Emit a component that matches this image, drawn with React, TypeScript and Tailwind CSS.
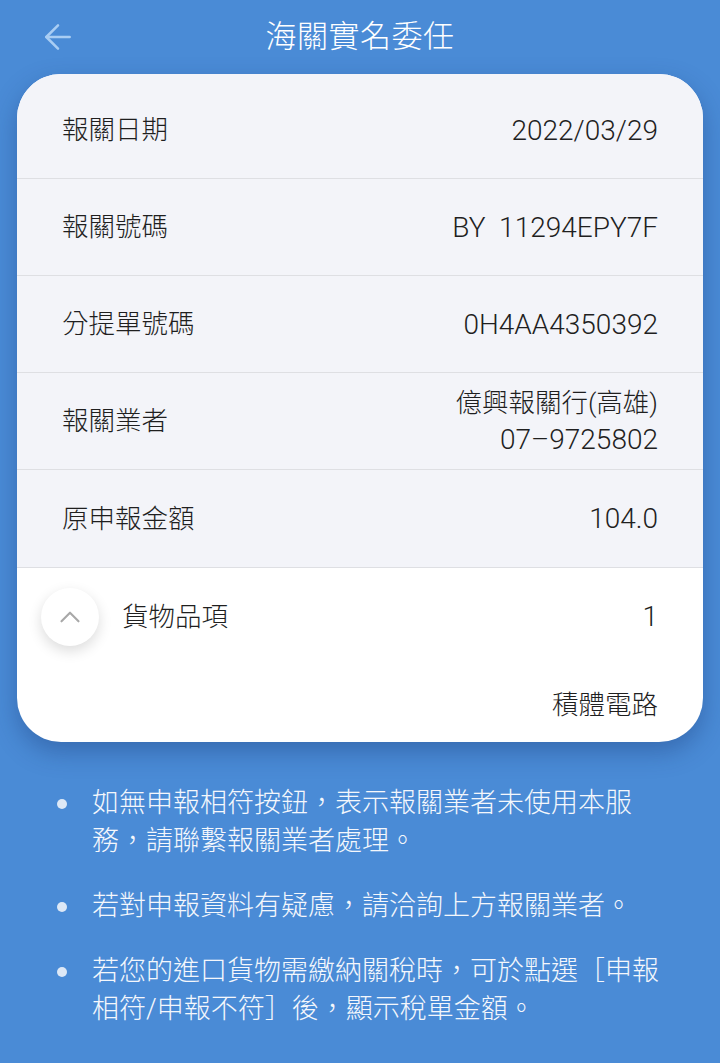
import { ArrowLeft, ChevronUp } from "lucide-react";

const font = { fontFamily: 'Roboto, "Noto Sans CJK TC", "Noto Sans", sans-serif' };

const rows = [
  { label: "報關日期", value: ["2022/03/29"] },
  { label: "報關號碼", value: ["BY  11294EPY7F"] },
  { label: "分提單號碼", value: ["0H4AA4350392"] },
  { label: "報關業者", value: ["億興報關行(高雄)", "07–9725802"] },
  { label: "原申報金額", value: ["104.0"] },
];

const notes = [
  "如無申報相符按鈕，表示報關業者未使用本服務，請聯繫報關業者處理。",
  "若對申報資料有疑慮，請洽詢上方報關業者。",
  "若您的進口貨物需繳納關稅時，可於點選［申報相符/申報不符］後，顯示稅單金額。",
];

const isCjk = (s: string) => /[\u4e00-\u9fff]/.test(s);

export default function App() {
  return (
    <div className="min-h-[1063px] w-[720px] bg-[#4a8bd6] font-light text-[#1f1f1f]" style={font}>
      <header className="relative flex h-[74px] items-center justify-center">
        <ArrowLeft className="absolute left-[38px] top-[17px] h-[40px] w-[40px] text-[#a9cdf3]" strokeWidth={1.5} />
        <h1 className="text-[31px] tracking-[0.5px] text-white">海關實名委任</h1>
      </header>

      <div className="mx-[17px] overflow-hidden rounded-[44px] bg-white shadow-[0_10px_24px_rgba(20,50,110,0.35)]">
        <div className="bg-[#f3f4f9] pt-[8px]">
          {rows.map((r, i) => (
            <div
              key={r.label}
              className={`flex h-[97px] items-center justify-between px-[45px] ${i < rows.length - 1 ? "border-b border-[#dedfe3]" : ""}`}
            >
              <span className="text-[26.5px]">{r.label}</span>
              <div className="flex flex-col items-end leading-[37px]">
                {r.value.map((v) => (
                  <span key={v} className={`whitespace-pre ${isCjk(v) ? "text-[26.5px]" : "text-[28px]"}`}>
                    {v}
                  </span>
                ))}
              </div>
            </div>
          ))}
        </div>
        <div className="border-t border-[#dedfe3] px-[45px] pb-[19px]">
          <div className="flex h-[97px] items-center justify-between">
            <div className="flex items-center">
              <div className="-ml-[21px] mr-[23px] flex h-[58px] w-[58px] items-center justify-center rounded-full bg-white shadow-[0_5px_14px_rgba(0,0,0,0.14)]">
                <ChevronUp className="h-[34px] w-[34px] text-[#a9a9a9]" strokeWidth={1.5} />
              </div>
              <span className="text-[26.5px]">貨物品項</span>
            </div>
            <span className="text-[28px]">1</span>
          </div>
          <div className="mt-[21px] flex justify-end text-[26.5px] leading-[37px]">積體電路</div>
        </div>
      </div>

      <ul className="flex flex-col gap-[27px] pl-[57px] pr-[44px] pt-[42px] text-white">
        {notes.map((n) => (
          <li key={n} className="flex gap-[25px] text-[27px] leading-[38px]">
            <span className="mt-[15px] h-[10px] w-[10px] shrink-0 rounded-full bg-[#dde8f6]" />
            <span className="text-[#f4f7fc]">{n}</span>
          </li>
        ))}
      </ul>
    </div>
  );
}
